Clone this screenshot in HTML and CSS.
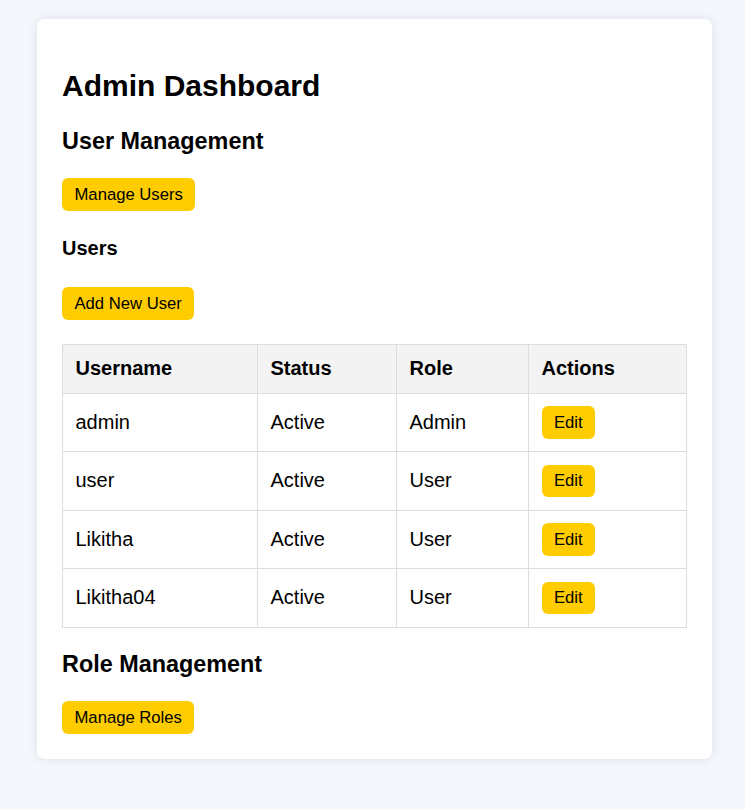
FILE: index.html
```html
<!DOCTYPE html>
<html lang="en">
<head>
<meta charset="utf-8">
<title>Admin Dashboard</title>
<link rel="stylesheet" href="styles.css">
</head>
<body>
<div class="container">
  <h1 class="title">Admin Dashboard</h1>
  <h2 class="section-title">User Management</h2>
  <div class="actions-row"><button class="btn">Manage Users</button></div>
  <h3 class="sub-title">Users</h3>
  <div class="actions-row"><button class="btn">Add New User</button></div>
  <table class="users-table">
    <colgroup>
      <col class="col-user">
      <col class="col-status">
      <col class="col-role">
      <col class="col-actions">
    </colgroup>
    <thead>
      <tr><th>Username</th><th>Status</th><th>Role</th><th>Actions</th></tr>
    </thead>
    <tbody>
      <tr><td>admin</td><td>Active</td><td>Admin</td><td><button class="btn">Edit</button></td></tr>
      <tr><td>user</td><td>Active</td><td>User</td><td><button class="btn">Edit</button></td></tr>
      <tr><td>Likitha</td><td>Active</td><td>User</td><td><button class="btn">Edit</button></td></tr>
      <tr><td>Likitha04</td><td>Active</td><td>User</td><td><button class="btn">Edit</button></td></tr>
    </tbody>
  </table>
  <h2 class="section-title">Role Management</h2>
  <div class="actions-row"><button class="btn">Manage Roles</button></div>
</div>
</body>
</html>
```
FILE: styles.css
```css
html, body {
  margin: 0;
  padding: 0;
}
body {
  background: #f4f7fb;
  font-family: "Liberation Sans", Arial, sans-serif;
  color: #000;
  padding: 19px 0 50px 37px;
}
.container {
  width: 625px;
  padding: 25px;
  background: #fff;
  border-radius: 8px;
  box-shadow: 0 0 12px rgba(0, 0, 0, 0.1);
}
.title {
  font-size: 30px;
  font-weight: bold;
  margin: 25px 0;
}
.section-title {
  font-size: 23.4px;
  font-weight: bold;
  margin: 23.4px 0;
}
.sub-title {
  font-size: 20px;
  font-weight: bold;
  margin: 26.6px 0;
}
.actions-row {
  display: block;
}
.btn {
  font-family: "Liberation Sans", Arial, sans-serif;
  font-size: 16.67px;
  line-height: 19px;
  color: #000;
  background: #ffcc00;
  border: none;
  border-radius: 6px;
  padding: 6.75px 12.5px;
  margin: 0;
  cursor: pointer;
}
.users-table {
  width: 624px;
  border-collapse: collapse;
  margin-top: 24px;
  font-size: 20px;
  table-layout: fixed;
}
.col-user { width: 195px; }
.col-status { width: 139px; }
.col-role { width: 132px; }
.col-actions { width: 158px; }
.users-table th,
.users-table td {
  border: 1px solid #ddd;
  padding: 12.5px;
  text-align: left;
  line-height: 23px;
}
.users-table th {
  background: #f3f3f3;
  font-weight: bold;
}
.users-table td {
  vertical-align: middle;
}
```
